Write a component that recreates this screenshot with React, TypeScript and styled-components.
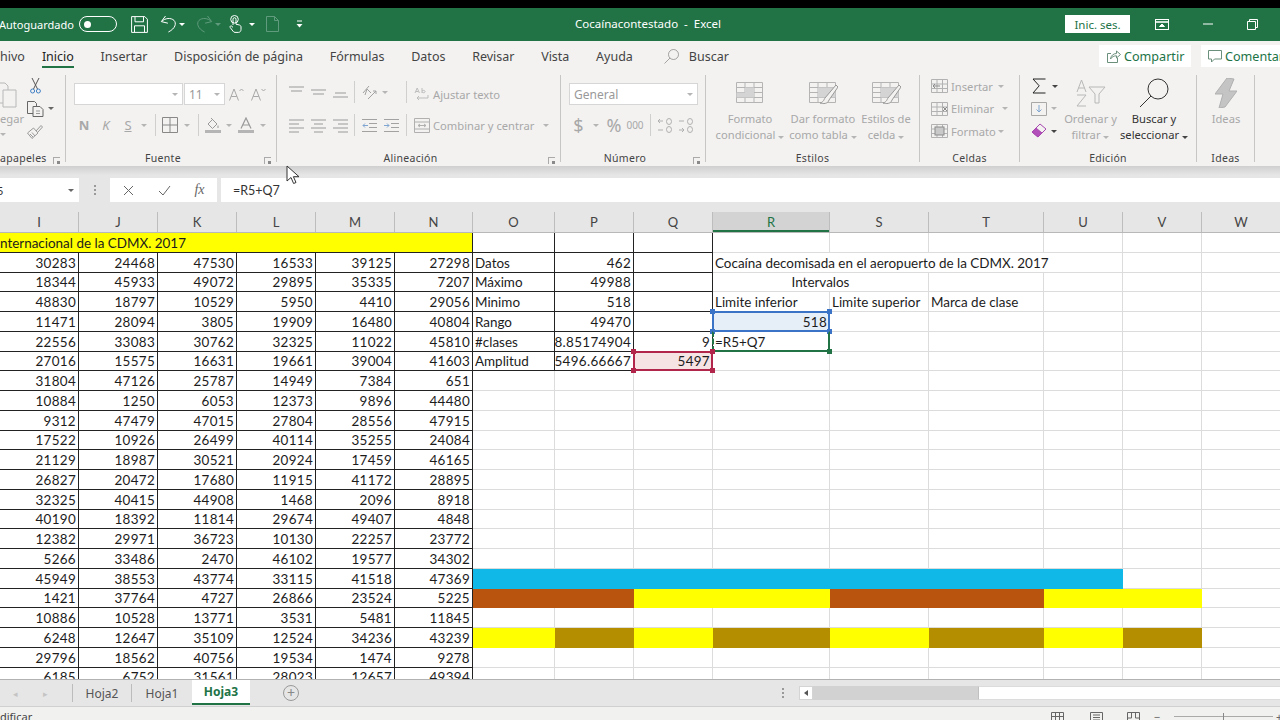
import React from 'react';
import styled, { createGlobalStyle } from 'styled-components';

const GREEN = '#217346';
const DIM = '#a8a8a8';
const FADED = '#5f9b7c';
const UI_FONT = '"Noto Sans", "Open Sans", sans-serif';
const CELL_FONT = 'Lato, "Liberation Sans", sans-serif';

const COLUMNS: [string, number][] = [
  ['I', 79], ['J', 79], ['K', 79], ['L', 79], ['M', 79], ['N', 78], ['O', 82], ['P', 79],
  ['Q', 79], ['R', 117], ['S', 99], ['T', 115], ['U', 79], ['V', 79], ['W', 79],
];
const TRACKS = COLUMNS.map((c) => `${c[1]}px`).join(' ');
const SIDE = COLUMNS.slice(6).map((c) => c[0]);

const DATA = [
  [30283, 24468, 47530, 16533, 39125, 27298],
  [18344, 45933, 49072, 29895, 35335, 7207],
  [48830, 18797, 10529, 5950, 4410, 29056],
  [11471, 28094, 3805, 19909, 16480, 40804],
  [22556, 33083, 30762, 32325, 11022, 45810],
  [27016, 15575, 16631, 19661, 39004, 41603],
  [31804, 47126, 25787, 14949, 7384, 651],
  [10884, 1250, 6053, 12373, 9896, 44480],
  [9312, 47479, 47015, 27804, 28556, 47915],
  [17522, 10926, 26499, 40114, 35255, 24084],
  [21129, 18987, 30521, 20924, 17459, 46165],
  [26827, 20472, 17680, 11915, 41172, 28895],
  [32325, 40415, 44908, 1468, 2096, 8918],
  [40190, 18392, 11814, 29674, 49407, 4848],
  [12382, 29971, 36723, 10130, 22257, 23772],
  [5266, 33486, 2470, 46102, 19577, 34302],
  [45949, 38553, 43774, 33115, 41518, 47369],
  [1421, 37764, 4727, 26866, 23524, 5225],
  [10886, 10528, 13771, 3531, 5481, 11845],
  [6248, 12647, 35109, 12524, 34236, 43239],
  [29796, 18562, 40756, 19534, 1474, 9278],
  [6185, 6752, 31561, 28023, 12657, 49394],
];

type Mark = 'blue' | 'green' | 'red';
type SideCell = {
  text?: string;
  right?: boolean;
  center?: boolean;
  span?: number;
  mark?: Mark;
};

const SIDE_CELLS: Record<string, SideCell> = {
  O2: { text: 'Datos' }, P2: { text: '462', right: true },
  O3: { text: 'Máximo' }, P3: { text: '49988', right: true },
  O4: { text: 'Minimo' }, P4: { text: '518', right: true },
  O5: { text: 'Rango' }, P5: { text: '49470', right: true },
  O6: { text: '#clases' }, P6: { text: '8.85174904', right: true }, Q6: { text: '9', right: true },
  O7: { text: 'Amplitud' }, P7: { text: '5496.66667', right: true },
  Q7: { text: '5497', right: true, mark: 'red' },
  R2: { text: 'Cocaína decomisada en el aeropuerto de la CDMX. 2017', span: 4 },
  R3: { text: 'Intervalos', center: true, span: 2 },
  R4: { text: 'Limite inferior' }, S4: { text: 'Limite superior' }, T4: { text: 'Marca de clase' },
  R5: { text: '518', right: true, mark: 'blue' },
  R6: { text: '=R5+Q7', mark: 'green' },
};

const Y = '#ffff00';
const BROWN = '#b9540f';
const GOLD = '#b58e00';
const SKY = '#10b8e8';
const FILLS: Record<number, Record<string, string>> = {
  18: { O: SKY, P: SKY, Q: SKY, R: SKY, S: SKY, T: SKY, U: SKY },
  19: { O: BROWN, P: BROWN, Q: Y, R: Y, S: BROWN, T: BROWN, U: Y, V: Y },
  21: { O: Y, P: GOLD, Q: Y, R: GOLD, S: Y, T: GOLD, U: Y, V: GOLD },
};

const MARKS = {
  blue: { line: '#3b74c6', bg: '#e6eef8' },
  green: { line: GREEN, bg: '#ffffff' },
  red: { line: '#b3264c', bg: '#f6e4e5' },
};

const Global = createGlobalStyle`
  html, body { margin: 0; padding: 0; background: #000; overflow: hidden; }
  * { box-sizing: border-box; }
`;

const Page = styled.div`
  position: relative;
  width: 1280px;
  height: 720px;
  overflow: hidden;
  display: flex;
  flex-direction: column;
  padding-top: 8px;
  background: #000;
  font-family: ${UI_FONT};
`;

const TitleBar = styled.header`
  height: 33px;
  flex: none;
  display: grid;
  grid-template-columns: 575px 1fr auto;
  align-items: center;
  padding-bottom: 1px;
  background: ${GREEN};
  color: #fff;
`;
const Quick = styled.div`
  display: flex;
  align-items: center;
  height: 100%;
`;
const Auto = styled.span`
  width: 80px;
  margin-left: -1px;
  font-size: 11px;
`;
const Toggle = styled.span`
  width: 38px;
  height: 16px;
  border: 1.5px solid #fff;
  border-radius: 8px;
  display: flex;
  align-items: center;
  padding-left: 4px;
  margin-right: 14px;
  &::before {
    content: '';
    width: 7px;
    height: 7px;
    border-radius: 50%;
    background: #fff;
  }
`;
const Slot = styled.span<{ $w: number; $c?: string; $dy?: number }>`
  width: ${(p) => p.$w}px;
  flex: none;
  display: flex;
  align-items: center;
  justify-content: center;
  color: ${(p) => p.$c || 'inherit'};
  margin-top: ${(p) => p.$dy || 0}px;
`;
const DocTitle = styled.span`
  font-size: 11.5px;
  white-space: pre;
  margin-top: -1px;
`;
const WinTools = styled.div`
  display: flex;
  align-items: center;
`;
const SignIn = styled.span`
  width: 65px;
  height: 18px;
  margin-right: 14px;
  background: #fff;
  color: ${GREEN};
  font-size: 11.5px;
  display: flex;
  align-items: center;
  justify-content: center;
`;
const Svg = styled.svg<{ $c?: string; $flip?: boolean }>`
  display: block;
  fill: none;
  stroke: currentColor;
  stroke-width: 1;
  flex: none;
  color: ${(p) => p.$c || 'inherit'};
  transform: ${(p) => (p.$flip ? 'scaleX(-1)' : 'none')};
`;
const Caret = styled.i<{ $c?: string }>`
  display: inline-block;
  flex: none;
  width: 0;
  height: 0;
  border-left: 3px solid transparent;
  border-right: 3px solid transparent;
  border-top: 3px solid ${(p) => p.$c || '#b5b5b5'};
`;

const TabRow = styled.nav`
  height: 32px;
  flex: none;
  display: flex;
  align-items: center;
  gap: 26.7px;
  padding-bottom: 2px;
  background: #f3f2f1;
  color: #444;
  font-size: 12.5px;
`;
const Tab = styled.span<{ $active?: boolean; $first?: boolean }>`
  position: relative;
  white-space: nowrap;
  margin-right: ${(p) => (p.$first ? '-9.7px' : '0')};
  color: ${(p) => (p.$active ? '#222' : '#444')};
  ${(p) =>
    p.$active &&
    `&::after {
      content: '';
      position: absolute;
      left: 0;
      right: 0;
      bottom: -3px;
      height: 2px;
      background: ${GREEN};
    }`}
`;
const SearchTab = styled.span`
  display: flex;
  align-items: center;
  gap: 10px;
  margin-left: 4.3px;
`;
const ShareBtn = styled.span<{ $w: number }>`
  width: ${(p) => p.$w}px;
  height: 22px;
  flex: none;
  background: #fff;
  color: ${GREEN};
  display: flex;
  align-items: center;
  gap: 3px;
  padding-left: 7px;
  font-size: 12.6px;
  white-space: nowrap;
`;
const ShareBox = styled.div`
  margin-left: auto;
  display: flex;
  gap: 10px;
  width: 181px;
  flex: none;
`;

const Ribbon = styled.div`
  height: 93px;
  flex: none;
  display: flex;
  padding: 2px 0 4px;
  background: #f3f2f1;
  overflow: hidden;
`;
const Group = styled.section<{ $w: number }>`
  position: relative;
  width: ${(p) => p.$w}px;
  flex: none;
  display: flex;
  flex-direction: column;
  border-right: 1px solid #c6c6c4;
`;
const GroupBody = styled.div<{ $row?: boolean; $top?: number; $gap?: number; $left?: number }>`
  flex: 1;
  display: flex;
  flex-direction: ${(p) => (p.$row ? 'row' : 'column')};
  padding-top: ${(p) => p.$top || 0}px;
  padding-left: ${(p) => p.$left || 0}px;
  gap: ${(p) => p.$gap || 0}px;
`;
const GroupLabel = styled.div<{ $start?: boolean; $launch?: boolean }>`
  height: 14px;
  margin-bottom: -3px;
  padding-right: ${(p) => (p.$launch ? '16px' : '0')};
  font-size: 10.5px;
  line-height: 14px;
  letter-spacing: 0.3px;
  color: #444;
  text-align: ${(p) => (p.$start ? 'left' : 'center')};
  white-space: nowrap;
`;
const Launcher = styled.span`
  position: absolute;
  right: 5px;
  bottom: -2px;
  width: 7px;
  height: 7px;
  border-left: 1px solid #aaa;
  border-top: 1px solid #aaa;
  &::after {
    content: '';
    position: absolute;
    right: 0;
    bottom: 0;
    width: 3px;
    height: 3px;
    background: #8a8a8a;
  }
`;
const Row = styled.div<{ $left?: number; $h?: number }>`
  display: flex;
  align-items: center;
  height: ${(p) => p.$h || 22}px;
  padding-left: ${(p) => p.$left || 0}px;
  flex: none;
`;
const ToolCol = styled.div<{ $w?: number; $left?: number }>`
  width: ${(p) => (p.$w ? `${p.$w}px` : 'auto')};
  padding-left: ${(p) => p.$left || 0}px;
  flex: none;
`;
const Combo = styled.span<{ $w: number; $mr?: number }>`
  width: ${(p) => p.$w}px;
  height: 22px;
  margin-right: ${(p) => p.$mr || 0}px;
  flex: none;
  background: #fff;
  border: 1px solid #d6d6d6;
  color: #999;
  font-size: 12px;
  display: flex;
  align-items: center;
  justify-content: space-between;
  padding: 0 4px;
`;
const Glyph = styled.span<{ $w: number; $bold?: boolean; $italic?: boolean; $under?: boolean; $size?: number }>`
  width: ${(p) => p.$w}px;
  flex: none;
  text-align: center;
  color: ${DIM};
  font-size: ${(p) => p.$size || 13}px;
  font-weight: ${(p) => (p.$bold ? 700 : 400)};
  font-style: ${(p) => (p.$italic ? 'italic' : 'normal')};
  text-decoration: ${(p) => (p.$under ? 'underline' : 'none')};
  line-height: 1;
`;
const VSep = styled.i<{ $w: number }>`
  width: ${(p) => p.$w}px;
  height: 22px;
  flex: none;
  background: linear-gradient(#cfcfcd, #cfcfcd) center / 1px 100% no-repeat;
`;
const DimText = styled.span<{ $ml?: number; $dy?: number }>`
  color: ${DIM};
  font-size: 11.2px;
  white-space: nowrap;
  margin-left: ${(p) => p.$ml || 0}px;
  margin-top: ${(p) => p.$dy || 0}px;
`;
const BigItem = styled.div<{ $w: number; $start?: boolean }>`
  width: ${(p) => p.$w}px;
  flex: none;
  display: flex;
  flex-direction: column;
  align-items: ${(p) => (p.$start ? 'flex-start' : 'center')};
`;
const BigIcon = styled.div`
  height: 36px;
  display: flex;
  align-items: center;
  justify-content: center;
`;
const BigLabel = styled.div<{ $dark?: boolean }>`
  font-size: 11.2px;
  line-height: 16px;
  text-align: center;
  white-space: nowrap;
  color: ${(p) => (p.$dark ? '#333' : DIM)};
`;

const FormulaZone = styled.div`
  height: 46px;
  flex: none;
  display: flex;
  padding: 12px 0 10px;
  background: linear-gradient(#cfcfcf, #e6e6e6 9px);
  font-size: 12px;
  color: #333;
`;
const FormulaBox = styled.div<{ $w?: number }>`
  ${(p) => (p.$w ? `width: ${p.$w}px; flex: none;` : 'flex: 1;')}
  height: 24px;
  background: #fff;
  display: flex;
  align-items: center;
`;
const NameBox = styled(FormulaBox)`
  justify-content: space-between;
  padding-right: 5px;
  font-size: 11px;
  overflow: hidden;
`;
const NameText = styled.span`
  margin-left: -3px;
`;
const FormulaText = styled.span`
  margin-left: 12px;
  font-family: ${CELL_FONT};
  font-size: 12.5px;
`;
const Fx = styled.span`
  font-family: "Liberation Serif", serif;
  font-style: italic;
  font-size: 14px;
  color: #666;
`;
const Dots = styled.span`
  width: 2px;
  height: 10px;
  background: repeating-linear-gradient(#999 0 2px, transparent 2px 4px);
`;

const HeaderRow = styled.div`
  height: 21px;
  flex: none;
  display: grid;
  grid-template-columns: ${TRACKS};
  background: #e6e6e6;
  border-bottom: 1px solid #b8b8b8;
  overflow: hidden;
`;
const ColHead = styled.div<{ $active?: boolean }>`
  display: flex;
  align-items: center;
  justify-content: center;
  font-family: ${CELL_FONT};
  font-size: 13px;
  color: ${(p) => (p.$active ? GREEN : '#444')};
  background: ${(p) => (p.$active ? '#d3d3d3' : 'transparent')};
  border-right: 1px solid #bdbdbd;
  box-shadow: ${(p) => (p.$active ? `inset 0 -2px 0 ${GREEN}` : 'none')};
`;
const Sheet = styled.div`
  height: 446px;
  flex: none;
  display: grid;
  grid-template-columns: ${TRACKS};
  grid-auto-rows: 19.75px;
  background: #fff;
  overflow: hidden;
  font-family: ${CELL_FONT};
  font-size: 13.45px;
  color: #1c1c1c;
`;
const Cell = styled.div<{
  $right?: boolean;
  $center?: boolean;
  $span?: number;
  $strong?: boolean;
  $fill?: string;
  $mark?: Mark;
}>`
  position: relative;
  min-width: 0;
  display: flex;
  align-items: center;
  padding: 1px 2px 0 2px;
  white-space: nowrap;
  letter-spacing: ${(p) => (p.$right ? '0.32px' : '0')};
  justify-content: ${(p) => (p.$right ? 'flex-end' : p.$center ? 'center' : 'flex-start')};
  grid-column: span ${(p) => p.$span || 1};
  border-right: 1px solid ${(p) => p.$fill || (p.$strong ? '#222' : '#dcdcdc')};
  border-bottom: 1px solid ${(p) => p.$fill || (p.$strong ? '#222' : '#dcdcdc')};
  background: ${(p) => p.$fill || (p.$mark ? MARKS[p.$mark].bg : '#fff')};
`;
const TitleCell = styled(Cell)`
  background: ${Y};
  padding-left: 0;
  border-right-color: #222;
  border-bottom-color: #222;
`;
const Frame = styled.span<{ $mark: Mark }>`
  position: absolute;
  inset: -1px;
  border: 2px solid ${(p) => MARKS[p.$mark].line};
  border-top-color: ${(p) => (p.$mark === 'green' ? 'transparent' : MARKS[p.$mark].line)};
  border-left-style: ${(p) => (p.$mark === 'green' ? 'dashed' : 'solid')};
  z-index: 2;
`;
const Handle = styled.i<{ $x: 'left' | 'right'; $y: 'top' | 'bottom'; $c: string }>`
  position: absolute;
  ${(p) => p.$x}: -4px;
  ${(p) => p.$y}: -4px;
  width: 5px;
  height: 5px;
  background: ${(p) => p.$c};
`;
const FooterTabs = styled.div`
  height: 27px;
  flex: none;
  display: flex;
  align-items: center;
  background: #e6e6e6;
  border-top: 1px solid #b2b2b2;
  color: #555;
  font-size: 12px;
`;
const TabStrip = styled.div`
  width: 780px;
  flex: none;
  height: 100%;
  display: flex;
  align-items: center;
`;
const NavArrows = styled.div`
  width: 73px;
  height: 18px;
  flex: none;
  display: flex;
  align-items: center;
  justify-content: space-around;
  padding: 0 12px 0 0;
  border-right: 1px solid #bcbcbc;
  color: #c4c4c4;
  font-size: 9px;
`;
const SheetTab = styled.span<{ $active?: boolean; $w: number; $sep?: boolean }>`
  width: ${(p) => p.$w}px;
  flex: none;
  display: flex;
  align-items: center;
  justify-content: center;
  height: ${(p) => (p.$active ? '25px' : '18px')};
  margin-top: ${(p) => (p.$active ? '-2px' : '0')};
  font-weight: ${(p) => (p.$active ? 700 : 400)};
  color: ${(p) => (p.$active ? GREEN : '#555')};
  background: ${(p) => (p.$active ? '#fff' : 'transparent')};
  border-bottom: ${(p) => (p.$active ? `2px solid ${GREEN}` : 'none')};
  border-right: ${(p) => (p.$sep ? '1px solid #bcbcbc' : 'none')};
`;
const AddSheet = styled.span`
  width: 16px;
  height: 16px;
  margin-left: 33px;
  border: 1.5px solid #999;
  border-radius: 50%;
  color: #888;
  display: flex;
  align-items: center;
  justify-content: center;
  font-size: 14px;
  line-height: 1;
`;
const ScrollBar = styled.div`
  flex: 1;
  display: flex;
  align-items: center;
  height: 14px;
`;
const ScrollArrow = styled.span`
  width: 14px;
  height: 14px;
  margin-left: 14px;
  background: #fff;
  border: 1px solid #d4d4d4;
  display: flex;
  align-items: center;
  justify-content: center;
  &::before {
    content: '';
    border-top: 3px solid transparent;
    border-bottom: 3px solid transparent;
    border-right: 4px solid #555;
  }
`;
const ScrollTrack = styled.span`
  width: 165px;
  height: 14px;
  background: #d2d2d2;
`;
const ScrollThumb = styled.span`
  flex: 1;
  height: 14px;
  background: #fff;
  border-left: 1px solid #c0c0c0;
  border-top: 1px solid #dcdcdc;
  border-bottom: 1px solid #dcdcdc;
`;
const StatusBar = styled.footer`
  flex: 1;
  display: flex;
  align-items: center;
  justify-content: space-between;
  background: #f1f1ef;
  border-top: 1px solid #d0d0d0;
  color: #444;
  font-size: 11px;
  overflow: hidden;
`;
const StatusText = styled.span`
  margin-top: 5px;
`;
const StatusTools = styled.div`
  display: flex;
  align-items: center;
  color: #666;
  margin-top: 6px;
  width: 237px;
`;
const Zoom = styled.span`
  width: 99px;
  height: 1px;
  flex: none;
  background: #aaa;
  position: relative;
  margin: 0 3px 0 4px;
  &::after {
    content: '';
    position: absolute;
    left: 49px;
    top: -3px;
    width: 1px;
    height: 7px;
    background: #888;
  }
`;
const Cursor = styled.svg`
  position: absolute;
  left: 286px;
  top: 165px;
  z-index: 5;
`;

function Save() {
  return (
    <Svg width="17" height="17" viewBox="0 0 17 17" strokeWidth="1.2">
      <path d="M.6.6h13.2l2.6 2.6v13.2H.6z" />
      <path d="M4 .8v5h8.5v-5M3.5 16.2V9.8h10v6.4" />
    </Svg>
  );
}
function Undo({ flip, color }: { flip?: boolean; color?: string }) {
  return (
    <Svg width="17" height="18" viewBox="0 0 17 18" strokeWidth="1.4" $flip={flip} $c={color}>
      <path d="M5.5 1 1.3 6.6l6.6 1.6" />
      <path d="M1.8 6.4C5 3 11 2.5 14 5.4c2.6 2.8 1.6 8-5.6 11.6" />
    </Svg>
  );
}
function TouchMode() {
  return (
    <Svg width="13" height="18" viewBox="0 0 13 18" strokeWidth="1.1">
      <circle cx="5.5" cy="4.3" r="3.8" />
      <path d="M4 10V4.2a1.5 1.5 0 0 1 3 0v5l3.4.8c1 .3 1.6 1 1.6 2v2.5c0 1.6-1 2.9-2.6 2.9H6c-1 0-1.5-.5-2-1.2L1.2 12.5c-.8-1.2.8-2.2 1.7-1.2L4 12.4" />
    </Svg>
  );
}
function PageIcon() {
  return (
    <Svg width="13" height="16" viewBox="0 0 13 16">
      <path d="M.5.5h8l4 4v11H.5zM8.5.5v4h4" />
    </Svg>
  );
}
function Customize() {
  return (
    <Svg width="7" height="8" viewBox="0 0 7 8">
      <path d="M1 1h5" />
      <path d="M.5 4h6L3.5 7.5z" fill="currentColor" stroke="none" />
    </Svg>
  );
}
function RibbonDisplay() {
  return (
    <Svg width="14" height="11" viewBox="0 0 14 11">
      <rect x=".5" y=".5" width="13" height="10" />
      <path d="M.5 3h13" strokeWidth="1.6" />
      <path d="M4.5 7.5 7 5l2.5 2.5z" fill="currentColor" />
    </Svg>
  );
}
function Minimize() {
  return (
    <Svg width="10" height="2" viewBox="0 0 10 2">
      <path d="M0 1h10" />
    </Svg>
  );
}
function Restore() {
  return (
    <Svg width="11" height="11" viewBox="0 0 11 11">
      <path d="M.5 2.5h8v8h-8zM2.5 2.5v-2h8v8h-2" />
    </Svg>
  );
}
function Share() {
  return (
    <Svg width="15" height="14" viewBox="0 0 15 14" $c="#6a8f7b">
      <path d="M5 4.5H1.5v9h10V9M4.5 10c.4-3.5 3-5.5 6-5.5V2l4 3.5-4 3.5V6.8c-2.6 0-4.6 1-6 3.2z" />
    </Svg>
  );
}
function Comment() {
  return (
    <Svg width="14" height="13" viewBox="0 0 14 13" $c="#6a8f7b">
      <path d="M.5.5h13v8.5H6.5l-3 3V9h-3z" />
    </Svg>
  );
}
function Lens({ size, color, width = 1 }: { size: number; color: string; width?: number }) {
  return (
    <Svg width={size} height={size} viewBox="0 0 30 30" strokeWidth={width} $c={color}>
      <circle cx="19" cy="11" r="10" />
      <path d="M12 18 1 29" />
    </Svg>
  );
}
function PasteIcon() {
  return (
    <Svg width="17" height="30" viewBox="3 0 17 30" $c="#b8b8b8">
      <path d="M0 5h8l3 3v4M6 12h13v17H6z" />
      <path d="M0 25h6" />
    </Svg>
  );
}
function Scissors() {
  return (
    <Svg width="11" height="16" viewBox="0 0 11 16">
      <path d="M2 0l5.5 11M9 0 3.5 11" stroke="#555" />
      <circle cx="2.6" cy="13" r="2" stroke="#3f7fc4" />
      <circle cx="8.4" cy="13" r="2" stroke="#3f7fc4" />
    </Svg>
  );
}
function CopyIcon() {
  return (
    <Svg width="17" height="16" viewBox="0 0 17 16" $c="#666">
      <path d="M.5.5h7l2 2v10h-9z" />
      <path d="M6 5.5h7l3 3v7H6z" fill="#f3f2f1" />
      <path d="M9 10h4M9 12.5h4" stroke="#999" />
    </Svg>
  );
}
function Painter() {
  return (
    <Svg width="16" height="15" viewBox="0 0 16 15" $c="#999">
      <path d="M.5 9 5 14.5l6-5.5-4.5-5zM9 7l5-5.5 1.5 1.5L11 8" />
      <path d="M3 10l3 3M5 8.5 8 12" />
    </Svg>
  );
}
function GrowFont({ down }: { down?: boolean }) {
  return (
    <Svg width="16" height="13" viewBox="0 0 16 13" $c={DIM}>
      <path d="M.5 12.5 5 1l4.5 11.5M2.2 8.5h5.6" />
      <path d={down ? 'M10.5 1 12.5 3l2-2' : 'M10.5 3 12.5 1l2 2'} />
    </Svg>
  );
}
function Borders() {
  return (
    <Svg width="16" height="16" viewBox="0 0 16 16" $c="#888">
      <path d="M.5.5h15v15H.5zM8 .5v15M.5 8h15" />
    </Svg>
  );
}
function FillColor() {
  return (
    <Svg width="16" height="16" viewBox="0 0 16 16" $c="#999">
      <path d="M3 7 7.5 2.5 12 7l-4.5 4.5zM6 1l2 2M13 8.5v2.5" />
      <rect x="0" y="13" width="16" height="3" fill="#b5b5b5" stroke="none" />
    </Svg>
  );
}
function FontColor() {
  return (
    <Svg width="16" height="16" viewBox="0 0 16 16" $c="#999">
      <path d="M3 11.5 8 1l5 10.5M5 8h6" strokeWidth="1.2" />
      <rect x="0" y="13" width="16" height="3" fill="#b5b5b5" stroke="none" />
    </Svg>
  );
}
function Lines({ rows }: { rows: [number, number, number][] }) {
  return (
    <Svg width="15" height="15" viewBox="0 0 15 15" $c="#9a9a9a">
      {rows.map((r, i) => (
        <path key={i} d={`M${r[0]} ${r[2]}H${r[1]}`} />
      ))}
    </Svg>
  );
}
function Orientation() {
  return (
    <Svg width="15" height="15" viewBox="0 0 15 15" $c="#a2a2a2">
      <path d="M1 8 7 1M3 10l2-6 4 4M6 14l8-8M14 6v3M14 6h-3" />
    </Svg>
  );
}
function Indent({ back }: { back?: boolean }) {
  return (
    <Svg width="15" height="13" viewBox="0 0 15 13" $c="#a2a2a2">
      <path d="M0 .5h15M7 4.5h8M7 8.5h8M0 12.5h15" />
      <path d={back ? 'M6 6.5H1M3 4.5l-2 2 2 2' : 'M0 6.5h5M3 4.5l2 2-2 2'} stroke="#7fa5d0" />
    </Svg>
  );
}
function WrapIcon() {
  return (
    <Svg width="16" height="15" viewBox="0 0 16 15" $c="#bdbdbd">
      <path d="M1 6 3.2 1l2.2 5M2 4.5h2.4M8 1v5M8 4c2-1.5 3.5 0 3 1s-2 1-3 0M14 8v3H3M5 9l-2 2 2 2" />
    </Svg>
  );
}
function MergeIcon() {
  return (
    <Svg width="16" height="15" viewBox="0 0 16 15" $c="#b0b0b0">
      <path d="M.5.5h15v14H.5zM.5 4h15M.5 11h15M4 7.5h8M4 7.5l2-1.5M4 7.5 6 9M12 7.5 10 6M12 7.5 10 9" />
    </Svg>
  );
}
function Shift({ left }: { left?: boolean }) {
  return (
    <Svg width="16" height="15" viewBox="0 0 16 15" $c="#b0b0b0">
      <path d={left ? 'M6 3H1l2-2M1 3l2 2M1 12h5' : 'M1 3h5M1 12h5M4 10l2 2-2 2'} />
      <ellipse cx="12" cy="3.5" rx="2.5" ry="3" />
      <ellipse cx="12" cy="11.5" rx="2.5" ry="3" />
    </Svg>
  );
}
function TableStyle({ tone }: { tone: 'cond' | 'table' | 'cell' }) {
  return (
    <Svg width="30" height="24" viewBox="0 0 30 24" $c="#b4b4b4">
      <path d="M1.5 1.5h26v20h-26zM1.5 6.5h26M1.5 11.5h26M1.5 16.5h26M10 1.5v20M19 1.5v20" />
      {tone === 'cond' ? (
        <path d="M10 6.5h9v5h-9zM1.5 11.5H19v5H1.5z" fill="#d4d4d4" stroke="none" />
      ) : (
        <path d="M10 6.5h17.5v10H10z" fill="#d4d4d4" stroke="none" />
      )}
      {tone !== 'cond' && (
        <path d="M28 4 17 17c-1 1-1 4-5 5 3 1 8 1 9-3L30 6z" fill="#f3f2f1" stroke="#999" />
      )}
    </Svg>
  );
}
function CellOp({ kind }: { kind: 'in' | 'del' | 'fmt' }) {
  return (
    <Svg width="17" height="16" viewBox="0 0 17 16" $c="#b2b2b2">
      <path d="M.5 1.5h16v13H.5zM.5 6h16M.5 10.5h16M6 1.5v13M11.5 1.5v13" />
      {kind === 'in' && <path d="M2 8h7M4 6 2 8l2 2" stroke="#8b8b8b" />}
      {kind === 'del' && <path d="M12 6l4 4M16 6l-4 4" stroke="#8b8b8b" />}
      {kind === 'fmt' && <rect x="4" y="4" width="9" height="8" fill="#c9c9c9" stroke="#8b8b8b" />}
    </Svg>
  );
}
function Sigma() {
  return (
    <Svg width="14" height="16" viewBox="0 0 14 16" $c="#222">
      <path d="M13.5 1H1l6.2 6.8L1 15h12.5" />
    </Svg>
  );
}
function Eraser() {
  return (
    <Svg width="16" height="16" viewBox="0 0 16 16" strokeWidth="1.2">
      <path d="M1 9 9 1l6 5-8 8z" fill="#f3f2f1" stroke="#a947b0" />
      <path d="M1 9 5 5l6 5-4 4z" fill="#b24fb8" stroke="#a947b0" />
    </Svg>
  );
}
function FillDown() {
  return (
    <Svg width="16" height="14" viewBox="0 0 16 14" $c="#a8a8a8">
      <path d="M.5.5h15v13H.5z" />
      <path d="M8 3v7M5.5 7.5 8 10l2.5-2.5" stroke="#7fa5d0" />
    </Svg>
  );
}
function SortFilter() {
  return (
    <Svg width="30" height="28" viewBox="0 0 30 28" $c="#b8b8b8">
      <path d="M1 13 5.5 1 10 13M2.5 9h6M1 16h9L1 27h9" />
      <path d="M13 8h16l-6 7v9h-4v-9z" />
    </Svg>
  );
}
function Bolt() {
  return (
    <Svg width="22" height="30" viewBox="0 0 22 30">
      <path d="M12 0 0 16h8L4 30l6-1 12-16h-8l5-12z" fill="#c4c4c4" stroke="#b0b0b0" />
    </Svg>
  );
}
function ViewGrid() {
  return (
    <Svg width="13" height="10" viewBox="0 0 13 10">
      <path d="M.5.5h12v12H.5zM4.5.5v12M8.5.5v12M.5 4.5h12M.5 8.5h12" />
    </Svg>
  );
}
function ViewPage() {
  return (
    <Svg width="13" height="10" viewBox="0 0 13 10">
      <path d="M.5.5h12v12H.5zM3 3h7M3 5.5h7M3 8h7" />
    </Svg>
  );
}
function ViewBreak() {
  return (
    <Svg width="13" height="10" viewBox="0 0 13 10">
      <path d="M.5 10V.5h12V10M.5 6h4V.5M8.5.5V6h4" />
    </Svg>
  );
}

function TopBar() {
  return (
    <TitleBar>
      <Quick>
        <Auto>Autoguardado</Auto>
        <Toggle />
        <Save />
        <Slot $w={12} />
        <Undo />
        <Slot $w={10}>
          <Caret $c="#fff" />
        </Slot>
        <Slot $w={9} />
        <Undo flip color={FADED} />
        <Slot $w={10}>
          <Caret $c={FADED} />
        </Slot>
        <Slot $w={6} />
        <TouchMode />
        <Slot $w={20}>
          <Caret $c="#fff" />
        </Slot>
        <Slot $w={20} $c={FADED}>
          <PageIcon />
        </Slot>
        <Slot $w={34}>
          <Customize />
        </Slot>
      </Quick>
      <DocTitle>{'Cocaínacontestado  -  Excel'}</DocTitle>
      <WinTools>
        <SignIn>Inic. ses.</SignIn>
        <Slot $w={36}>
          <RibbonDisplay />
        </Slot>
        <Slot $w={56}>
          <Minimize />
        </Slot>
        <Slot $w={33}>
          <Restore />
        </Slot>
        <Slot $w={11} />
      </WinTools>
    </TitleBar>
  );
}

function Tabs() {
  const tabs = ['Insertar', 'Disposición de página', 'Fórmulas', 'Datos', 'Revisar', 'Vista', 'Ayuda'];
  return (
    <TabRow>
      <Tab $first>hivo</Tab>
      <Tab $active>Inicio</Tab>
      {tabs.map((t) => (
        <Tab key={t}>{t}</Tab>
      ))}
      <SearchTab>
        <Lens size={15} color="#555" width={2} />
        Buscar
      </SearchTab>
      <ShareBox>
        <ShareBtn $w={92}>
          <Share />
          Compartir
        </ShareBtn>
        <ShareBtn $w={90}>
          <Comment />
          Comentar
        </ShareBtn>
      </ShareBox>
    </TabRow>
  );
}

function RibbonPanel() {
  return (
    <Ribbon>
      <Group $w={66}>
        <GroupBody $row>
          <BigItem $w={26} $start>
            <BigIcon>
              <PasteIcon />
            </BigIcon>
            <BigLabel>egar</BigLabel>
            <Row $h={14}>
              <Caret />
            </Row>
          </BigItem>
          <ToolCol>
            <Row>
              <Slot $w={18}>
                <Scissors />
              </Slot>
            </Row>
            <Row $h={23}>
              <Slot $w={18}>
                <CopyIcon />
              </Slot>
              <Slot $w={14}>
                <Caret $c="#666" />
              </Slot>
            </Row>
            <Row>
              <Slot $w={18}>
                <Painter />
              </Slot>
            </Row>
          </ToolCol>
        </GroupBody>
        <GroupLabel $start>apapeles</GroupLabel>
        <Launcher />
      </Group>

      <Group $w={211}>
        <GroupBody $top={8} $gap={9}>
          <Row $left={8}>
            <Combo $w={109} $mr={1}>
              <span />
              <Caret />
            </Combo>
            <Combo $w={41} $mr={1}>
              11
              <Caret />
            </Combo>
            <Slot $w={22}><GrowFont /></Slot>
            <Slot $w={22}><GrowFont down /></Slot>
          </Row>
          <Row $left={7}>
            <Glyph $w={22} $bold>N</Glyph>
            <Glyph $w={22} $italic>K</Glyph>
            <Glyph $w={22} $under>S</Glyph>
            <Slot $w={10}><Caret /></Slot>
            <VSep $w={12} />
            <Slot $w={18}><Borders /></Slot>
            <Slot $w={16}><Caret /></Slot>
            <VSep $w={6} />
            <Slot $w={24}><FillColor /></Slot>
            <Slot $w={8}><Caret /></Slot>
            <Slot $w={26}><FontColor /></Slot>
            <Slot $w={8}><Caret /></Slot>
          </Row>
        </GroupBody>
        <GroupLabel $launch>Fuente</GroupLabel>
        <Launcher />
      </Group>

      <Group $w={284}>
        <GroupBody $top={6} $gap={11}>
          <Row $left={8}>
            <Slot $w={22}><Lines rows={[[0, 15, 2], [2, 13, 6]]} /></Slot>
            <Slot $w={22}><Lines rows={[[0, 15, 5], [2, 13, 9]]} /></Slot>
            <Slot $w={22}><Lines rows={[[2, 13, 8], [0, 15, 12]]} /></Slot>
            <VSep $w={6} />
            <Slot $w={24}><Orientation /></Slot>
            <Slot $w={8}><Caret /></Slot>
            <Slot $w={13} />
            <VSep $w={8} />
            <Slot $w={23} $dy={4}><WrapIcon /></Slot>
            <DimText $dy={5}>Ajustar texto</DimText>
          </Row>
          <Row $left={8}>
            <Slot $w={22}><Lines rows={[[0, 15, 2], [0, 10, 6], [0, 15, 10], [0, 10, 14]]} /></Slot>
            <Slot $w={22}><Lines rows={[[0, 15, 2], [3, 12, 6], [0, 15, 10], [3, 12, 14]]} /></Slot>
            <Slot $w={22}><Lines rows={[[0, 15, 2], [5, 15, 6], [0, 15, 10], [5, 15, 14]]} /></Slot>
            <VSep $w={6} />
            <Slot $w={24}><Indent back /></Slot>
            <Slot $w={21}><Indent /></Slot>
            <VSep $w={8} />
            <Slot $w={23}><MergeIcon /></Slot>
            <DimText>Combinar y centrar</DimText>
            <Slot $w={24}><Caret /></Slot>
          </Row>
        </GroupBody>
        <GroupLabel $launch>Alineación</GroupLabel>
        <Launcher />
      </Group>

      <Group $w={145}>
        <GroupBody $top={8} $gap={9}>
          <Row $left={8}>
            <Combo $w={129}>
              General
              <Caret />
            </Combo>
          </Row>
          <Row $left={6}>
            <Glyph $w={23} $size={18}>$</Glyph>
            <Slot $w={12}><Caret /></Slot>
            <Glyph $w={24} $size={18}>%</Glyph>
            <Glyph $w={18} $size={10}>000</Glyph>
            <VSep $w={12} />
            <Slot $w={18}><Shift left /></Slot>
            <Slot $w={24}><Shift /></Slot>
          </Row>
        </GroupBody>
        <GroupLabel $launch>Número</GroupLabel>
        <Launcher />
      </Group>

      <Group $w={214}>
        <GroupBody $row $left={8}>
          <BigItem $w={72}>
            <BigIcon><TableStyle tone="cond" /></BigIcon>
            <BigLabel>Formato<br />condicional <Caret /></BigLabel>
          </BigItem>
          <BigItem $w={74}>
            <BigIcon><TableStyle tone="table" /></BigIcon>
            <BigLabel>Dar formato<br />como tabla <Caret /></BigLabel>
          </BigItem>
          <BigItem $w={52}>
            <BigIcon><TableStyle tone="cell" /></BigIcon>
            <BigLabel>Estilos de<br />celda <Caret /></BigLabel>
          </BigItem>
        </GroupBody>
        <GroupLabel>Estilos</GroupLabel>
      </Group>

      <Group $w={100}>
        <GroupBody>
          <Row $left={11} $h={22.5}>
            <CellOp kind="in" />
            <DimText $ml={3}>Insertar</DimText>
            <Slot $w={16}><Caret /></Slot>
          </Row>
          <Row $left={11} $h={22.5}>
            <CellOp kind="del" />
            <DimText $ml={3}>Eliminar</DimText>
            <Slot $w={22}><Caret /></Slot>
          </Row>
          <Row $left={11} $h={22.5}>
            <CellOp kind="fmt" />
            <DimText $ml={3}>Formato</DimText>
            <Slot $w={10}><Caret /></Slot>
          </Row>
        </GroupBody>
        <GroupLabel>Celdas</GroupLabel>
      </Group>

      <Group $w={177}>
        <GroupBody $row>
          <ToolCol $w={44}>
            <Row $left={12} $h={22.5}>
              <Sigma />
              <Slot $w={18}><Caret $c="#444" /></Slot>
            </Row>
            <Row $left={11} $h={22.5}>
              <FillDown />
              <Slot $w={14}><Caret /></Slot>
            </Row>
            <Row $left={11} $h={22.5}>
              <Eraser />
              <Slot $w={14}><Caret $c="#444" /></Slot>
            </Row>
          </ToolCol>
          <BigItem $w={53}>
            <BigIcon><SortFilter /></BigIcon>
            <BigLabel>Ordenar y<br />filtrar <Caret /></BigLabel>
          </BigItem>
          <BigItem $w={74}>
            <BigIcon><Lens size={30} color="#333" /></BigIcon>
            <BigLabel $dark>Buscar y<br />seleccionar <Caret $c="#444" /></BigLabel>
          </BigItem>
        </GroupBody>
        <GroupLabel>Edición</GroupLabel>
      </Group>

      <Group $w={58}>
        <GroupBody>
          <BigItem $w={58}>
            <BigIcon><Bolt /></BigIcon>
            <BigLabel>Ideas</BigLabel>
          </BigItem>
        </GroupBody>
        <GroupLabel>Ideas</GroupLabel>
      </Group>
    </Ribbon>
  );
}

function FormulaBar() {
  return (
    <FormulaZone>
      <NameBox $w={79}>
        <NameText>5</NameText>
        <Caret $c="#666" />
      </NameBox>
      <Slot $w={31}>
        <Dots />
      </Slot>
      <FormulaBox $w={107}>
        <Slot $w={36}>
          <Svg width="11" height="11" viewBox="0 0 11 11" strokeWidth="1.6" $c="#666">
            <path d="M1 1l9 9M10 1 1 10" />
          </Svg>
        </Slot>
        <Slot $w={36}>
          <Svg width="13" height="11" viewBox="0 0 13 11" strokeWidth="2" $c="#666">
            <path d="M1 6l4 4 7-9" />
          </Svg>
        </Slot>
        <Slot $w={35}>
          <Fx>fx</Fx>
        </Slot>
      </FormulaBox>
      <Slot $w={4} />
      <FormulaBox>
        <FormulaText>=R5+Q7</FormulaText>
      </FormulaBox>
    </FormulaZone>
  );
}

function Selection({ mark }: { mark: Mark }) {
  const c = MARKS[mark].line;
  return (
    <Frame $mark={mark}>
      {mark !== 'green' && <Handle $x="left" $y="top" $c={c} />}
      {mark !== 'green' && <Handle $x="right" $y="top" $c={c} />}
      {mark !== 'green' && <Handle $x="left" $y="bottom" $c={c} />}
      <Handle $x="right" $y="bottom" $c={c} />
    </Frame>
  );
}

function SideCells({ row }: { row: number }) {
  const out = [];
  let skip = 0;
  for (const col of SIDE) {
    if (skip > 0) {
      skip -= 1;
      continue;
    }
    const def = SIDE_CELLS[`${col}${row}`] || {};
    const inBox = 'OPQ'.includes(col) && row >= 1 && row <= 7;
    skip = (def.span || 1) - 1;
    out.push(
      <Cell
        key={col}
        $right={def.right}
        $center={def.center}
        $span={def.span}
        $strong={inBox}
        $fill={FILLS[row]?.[col]}
        $mark={def.mark}
      >
        {def.text}
        {def.mark && <Selection mark={def.mark} />}
      </Cell>,
    );
  }
  return <>{out}</>;
}

export default function App() {
  return (
    <Page>
      <Global />
      <TopBar />
      <Tabs />
      <RibbonPanel />
      <FormulaBar />
      <HeaderRow>
        {COLUMNS.map(([name]) => (
          <ColHead key={name} $active={name === 'R'}>
            {name}
          </ColHead>
        ))}
      </HeaderRow>
      <Sheet>
        <TitleCell $span={6}>nternacional de la CDMX. 2017</TitleCell>
        <SideCells row={1} />
        {DATA.map((values, i) => (
          <React.Fragment key={i}>
            {values.map((v, j) => (
              <Cell key={j} $right $strong>
                {v}
              </Cell>
            ))}
            <SideCells row={i + 2} />
          </React.Fragment>
        ))}
      </Sheet>
      <FooterTabs>
        <TabStrip>
          <NavArrows>
            <span>◂</span>
            <span>▸</span>
          </NavArrows>
          <SheetTab $w={59} $sep>Hoja2</SheetTab>
          <SheetTab $w={60}>Hoja1</SheetTab>
          <SheetTab $w={58} $active>Hoja3</SheetTab>
          <AddSheet>+</AddSheet>
        </TabStrip>
        <ScrollBar>
          <Slot $w={5}>
            <Dots />
          </Slot>
          <ScrollArrow />
          <ScrollTrack />
          <ScrollThumb />
        </ScrollBar>
      </FooterTabs>
      <StatusBar>
        <StatusText>dificar</StatusText>
        <StatusTools>
          <Slot $w={28}><ViewGrid /></Slot>
          <Slot $w={51}><ViewPage /></Slot>
          <Slot $w={22}><ViewBreak /></Slot>
          <Slot $w={26}>−</Slot>
          <Zoom />
          <span>+</span>
        </StatusTools>
      </StatusBar>
      <Cursor width="14" height="21" viewBox="0 0 14 21">
        <path d="M1 1v15l4-3.5 2.6 6 2.4-1-2.6-5.8H13z" fill="#fff" stroke="#333" />
      </Cursor>
    </Page>
  );
}
